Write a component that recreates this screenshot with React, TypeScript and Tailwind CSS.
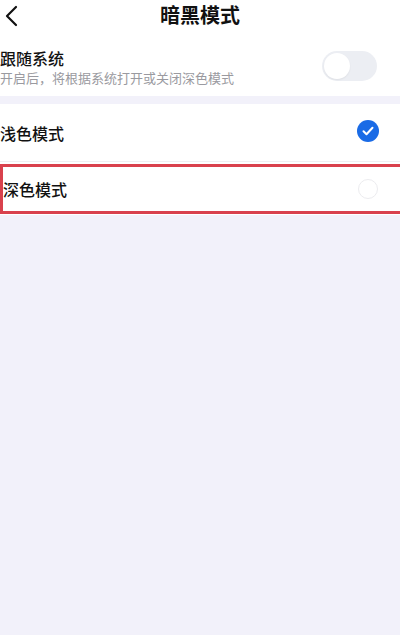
export default function App() {
  const font = { fontFamily: '"Noto Sans CJK SC", "Noto Sans", sans-serif' };

  return (
    <div className="min-h-[635px] bg-[#f2f1fa] text-[#111]" style={font}>
      {/* 顶部栏 */}
      <div className="relative flex h-[36px] items-center justify-center bg-white">
        <button className="absolute left-[3px] top-[4px] flex h-[24px] w-[16px] items-center justify-center">
          <svg width="14" height="22" viewBox="0 0 14 22" fill="none">
            <path d="M12 2L3 11l9 9" stroke="#111" strokeWidth="2.2" strokeLinecap="round" strokeLinejoin="round" />
          </svg>
        </button>
        <h1 className="mb-[6px] text-[20px] font-bold leading-none">暗黑模式</h1>
      </div>

      {/* 跟随系统 */}
      <div className="flex h-[60px] items-center justify-between bg-white pr-[23px]">
        <div className="flex flex-col pt-[2px]">
          <span className="text-[16px] font-medium leading-[20px]">跟随系统</span>
          <span className="mt-[1px] text-[13px] leading-[17px] text-[#9a9aa0]">开启后，将根据系统打开或关闭深色模式</span>
        </div>
        <div className="flex h-[30px] w-[55px] items-center rounded-full bg-[#eceef3] px-[2px]">
          <div className="h-[26px] w-[26px] rounded-full bg-white shadow-[0_1px_2px_rgba(0,0,0,0.06)]" />
        </div>
      </div>

      <div className="h-[8px]" />

      {/* 模式选择 */}
      <div className="bg-white">
        <div className="flex h-[58px] items-center justify-between border-b border-[#efeff2] pr-[21px]">
          <span className="text-[16px] font-medium">浅色模式</span>
          <div className="mt-[-3px] flex h-[22px] w-[22px] items-center justify-center rounded-full bg-[#1a6be6]">
            <svg width="12" height="10" viewBox="0 0 12 10" fill="none">
              <path d="M1.5 5.2l3 3 6-6.5" stroke="#fff" strokeWidth="2" strokeLinecap="round" strokeLinejoin="round" />
            </svg>
          </div>
        </div>
        <div className="h-[2px]" />
        <div className="flex h-[50px] items-center justify-between border-y-[3px] border-l-[3px] border-[#d9414d] pr-[22px]">
          <span className="text-[16px] font-medium">深色模式</span>
          <div className="h-[20px] w-[20px] rounded-full border border-[#ececef] bg-white" />
        </div>
        <div className="h-[1px]" />
      </div>
    </div>
  );
}
